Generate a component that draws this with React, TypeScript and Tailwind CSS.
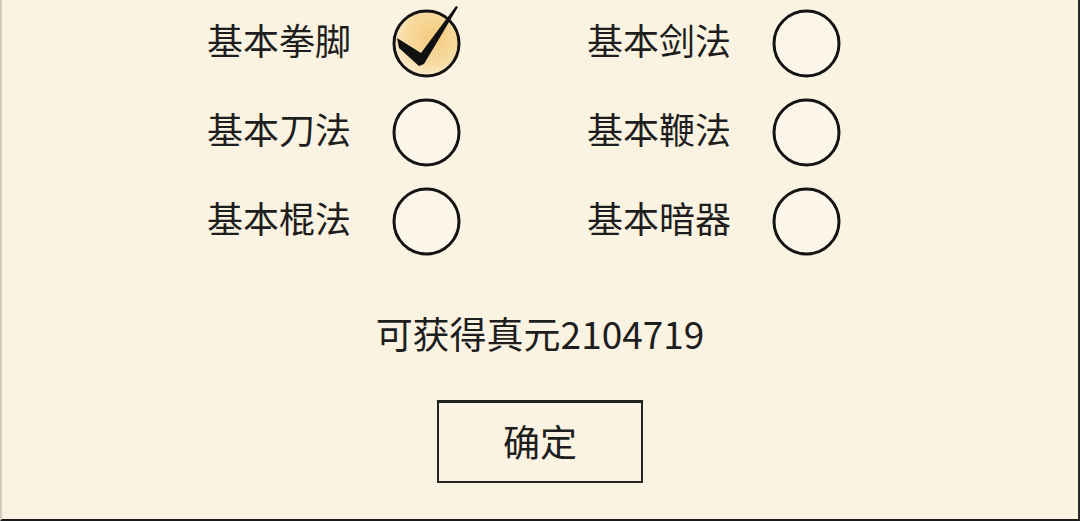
import { useState } from 'react';

const skills = [
  ['基本拳脚', '基本剑法'],
  ['基本刀法', '基本鞭法'],
  ['基本棍法', '基本暗器'],
];

function InkCircle({ checked }: { checked: boolean }) {
  return (
    <svg width="69" height="69" viewBox="0 0 69 69" className="overflow-visible shrink-0">
      <defs>
        <radialGradient id="warm" cx="0.6" cy="0.4" r="0.65">
          <stop offset="0%" stopColor="#f5cb7c" />
          <stop offset="65%" stopColor="#f8dba2" />
          <stop offset="100%" stopColor="#fbecd0" />
        </radialGradient>
      </defs>
      <circle cx="34.5" cy="34.5" r="32.5" fill={checked ? 'url(#warm)' : '#fcf6ea'} stroke="#141414" strokeWidth="3" />
      <path d="M6 50 A32.5 32.5 0 0 0 40 66.5" fill="none" stroke="#141414" strokeWidth="1.4" opacity="0.5" />
      {checked && (
        <polygon points="5,29 29,44 64,-3 66,-2 32,55 27,57 7,39" fill="#111" />
      )}
    </svg>
  );
}

export default function App() {
  const [picked, setPicked] = useState('基本拳脚');

  return (
    <div
      className="box-border flex h-[521px] w-[1080px] flex-col overflow-hidden border-b-2 border-l-2 border-r-2 border-b-[#1a1a1a] border-l-[#d2cbbb] border-r-[#2a2a2a] bg-[#fbf3e2] text-[#1e1e1e]"
      style={{ fontFamily: '"Noto Sans CJK SC", "Noto Sans", sans-serif' }}
    >
      <div className="mt-[-1px] grid grid-cols-[380px_380px] pl-[205px]">
        {skills.flat().map((name) => (
          <button
            key={name}
            onClick={() => setPicked(name)}
            className="flex h-[89px] items-center text-left"
          >
            <span className="w-[185px] pb-[9px] text-[36px] leading-none">{name}</span>
            <InkCircle checked={picked === name} />
          </button>
        ))}
      </div>

      <p className="mt-[47px] h-[40px] text-center text-[37px] leading-[40px]">可获得真元2104719</p>

      <button className="mx-auto mt-[47px] flex h-[83px] w-[206px] items-center justify-center border-2 border-t-[3px] border-[#222] pb-[2px] text-[37px] leading-none">
        确定
      </button>
    </div>
  );
}
